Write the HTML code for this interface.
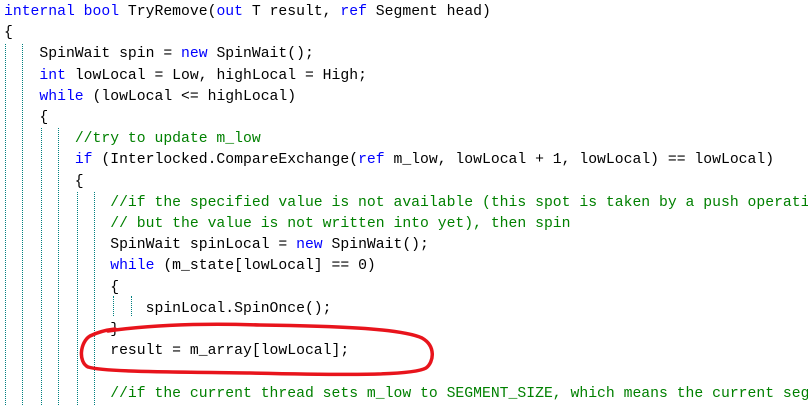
<!DOCTYPE html>
<html><head><meta charset="utf-8"><style>
body{margin:0;width:808px;height:405px;background:#fff;overflow:hidden;position:relative}
.l{position:absolute;left:4px;white-space:pre;font-family:"Liberation Mono",monospace;font-size:14.75px;line-height:21.2px;height:21.2px;color:#000}
.k{color:#0000ff}.c{color:#008000}
.g{position:absolute;width:0;border-left:1px dotted #008080}
</style></head><body>
<div class="g" style="left:5px;top:44px;height:361px"></div>
<div class="g" style="left:22px;top:44px;height:361px"></div>
<div class="g" style="left:41px;top:128px;height:277px"></div>
<div class="g" style="left:58px;top:128px;height:277px"></div>
<div class="g" style="left:77px;top:192px;height:213px"></div>
<div class="g" style="left:94px;top:192px;height:213px"></div>
<div class="g" style="left:113px;top:296px;height:20px"></div>
<div class="g" style="left:131px;top:296px;height:20px"></div>
<div class="l" style="top:2px"><span class="k">internal</span> <span class="k">bool</span> TryRemove(<span class="k">out</span> T result, <span class="k">ref</span> Segment head)</div>
<div class="l" style="top:23.2px">{</div>
<div class="l" style="top:44.4px">    SpinWait spin = <span class="k">new</span> SpinWait();</div>
<div class="l" style="top:65.6px">    <span class="k">int</span> lowLocal = Low, highLocal = High;</div>
<div class="l" style="top:86.8px">    <span class="k">while</span> (lowLocal &lt;= highLocal)</div>
<div class="l" style="top:108px">    {</div>
<div class="l" style="top:129.2px">        <span class="c">//try to update m_low</span></div>
<div class="l" style="top:150.4px">        <span class="k">if</span> (Interlocked.CompareExchange(<span class="k">ref</span> m_low, lowLocal + 1, lowLocal) == lowLocal)</div>
<div class="l" style="top:171.6px">        {</div>
<div class="l" style="top:192.8px">            <span class="c">//if the specified value is not available (this spot is taken by a push operation,</span></div>
<div class="l" style="top:214px">            <span class="c">// but the value is not written into yet), then spin</span></div>
<div class="l" style="top:235.2px">            SpinWait spinLocal = <span class="k">new</span> SpinWait();</div>
<div class="l" style="top:256.4px">            <span class="k">while</span> (m_state[lowLocal] == 0)</div>
<div class="l" style="top:277.6px">            {</div>
<div class="l" style="top:298.8px">                spinLocal.SpinOnce();</div>
<div class="l" style="top:320px">            }</div>
<div class="l" style="top:341.2px">            result = m_array[lowLocal];</div>
<div class="l" style="top:383.6px">            <span class="c">//if the current thread sets m_low to SEGMENT_SIZE, which means the current segment</span></div>
<svg style="position:absolute;left:0;top:0" width="808" height="405">
<path d="M108 331 C150 325 200 323 260 325 C330 326 400 328 422 338 C436 346 434 362 426 368 C412 376 340 375 250 373 C170 372 105 372 88 367 C78 362 80 342 90 336 C98 332 106 330 115 329" fill="none" stroke="#e8141c" stroke-width="3.5" stroke-linecap="round"/>
</svg>
</body></html>
